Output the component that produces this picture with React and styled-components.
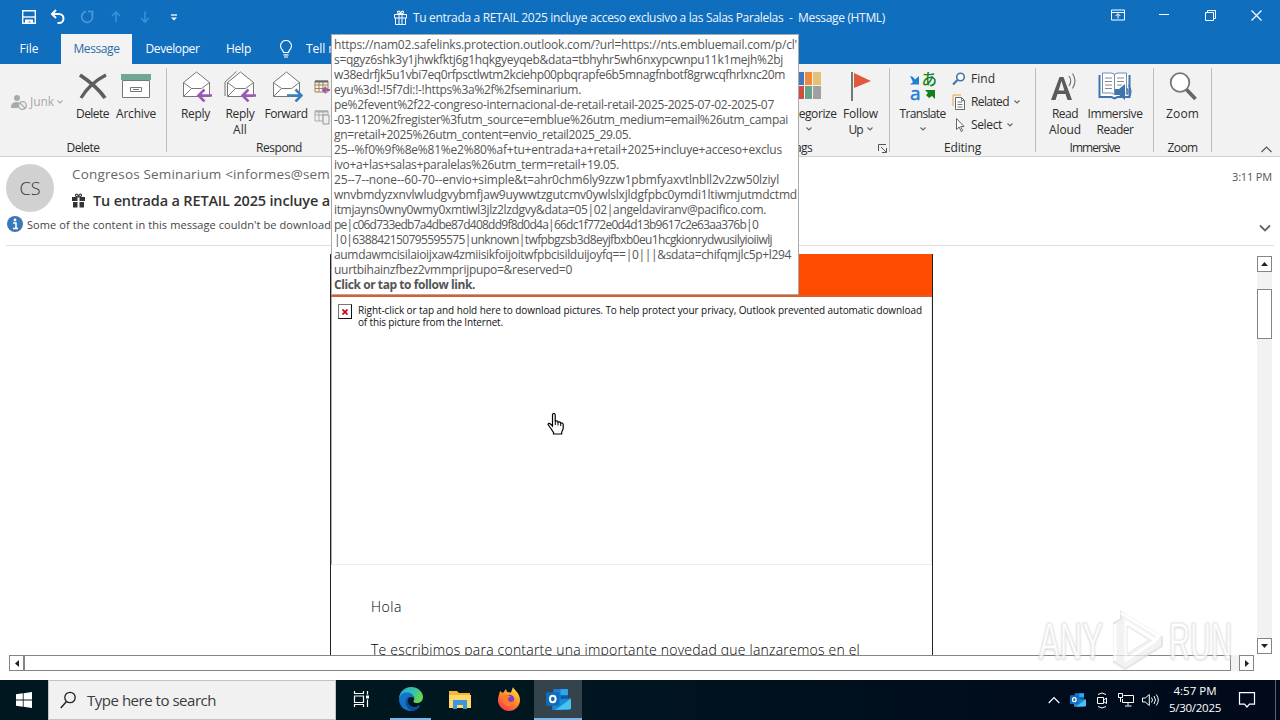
import React, { useLayoutEffect, useRef, useState } from 'react';
import styled, { createGlobalStyle } from 'styled-components';

const Global = createGlobalStyle`
  * { box-sizing: border-box; }
  body { margin: 0; background: #fff; overflow: hidden; }
  body, div, span { font-family: "Open Sans", "Noto Sans", sans-serif; }
  svg { display: block; flex: none; }
`;

const Run = styled.span`
  display: inline-block;
  white-space: pre;
  flex: none;
  font-size: ${p => p.$size || 12}px;
  font-weight: ${p => p.$weight || 400};
  color: ${p => p.$color || 'inherit'};
`;

/* A single line of text whose tracking is adjusted to fill a known width. */
function Text({ w, size, weight, color, children }) {
  const ref = useRef(null);
  const [tracking, setTracking] = useState(0);
  useLayoutEffect(() => {
    const el = ref.current;
    el.style.letterSpacing = '0px';
    const natural = el.getBoundingClientRect().width;
    setTracking((w - natural) / Math.max(1, children.length));
    el.style.letterSpacing = '';
  }, [w, children]);
  return (
    <Run ref={ref} $size={size} $weight={weight} $color={color} style={{ letterSpacing: tracking }}>
      {children}
    </Run>
  );
}

const Screen = styled.div`
  position: relative;
  display: flex;
  flex-direction: column;
  width: 1280px;
  height: 720px;
  overflow: hidden;
  background: #fff;
`;

/* ---------- Title bar ---------- */
const TitleBar = styled.div`
  display: flex;
  align-items: center;
  height: 34px;
  flex: none;
  background: #106ebe;
  color: #eef6fd;
`;
const QuickAccess = styled.div`
  display: flex;
  align-items: center;
  width: 394px;
  padding-left: 21px;
  gap: 13px;
`;
const Caption = styled.div`
  display: flex;
  align-items: center;
  gap: 6px;
  flex: 1;
`;
const WindowButtons = styled.div`
  display: flex;
  width: 185px;
  height: 30px;
  align-self: flex-start;
`;
const WindowButton = styled.div`
  display: flex;
  align-items: center;
  justify-content: center;
  width: 46px;
`;

/* ---------- Tabs ---------- */
const Tabs = styled.div`
  display: flex;
  height: 30px;
  flex: none;
  background: #106ebe;
  color: #fff;
`;
const Tab = styled.div`
  display: flex;
  align-items: center;
  justify-content: center;
  gap: 13px;
  width: ${p => p.$w}px;
  margin-left: ${p => p.$gap || 0}px;
  padding-bottom: 1px;
  background: ${p => (p.$active ? '#f3f3f3' : 'transparent')};
  color: ${p => (p.$active ? '#2b6cab' : '#fff')};
`;

/* ---------- Ribbon ---------- */
const Ribbon = styled.div`
  display: flex;
  height: 93px;
  flex: none;
  background: #f2f2f2;
  border-bottom: 1px solid #cfcfcf;
  color: #2d2d2d;
`;
const Group = styled.div`
  display: flex;
  flex-direction: column;
  width: ${p => p.$w}px;
  flex: none;
`;
const GroupBody = styled.div`
  display: flex;
  height: 76px;
  padding: ${p => p.$pad || '0'};
  justify-content: ${p => p.$justify || 'flex-start'};
`;
const GroupLabel = styled.div`
  display: flex;
  justify-content: center;
  align-items: center;
  height: 15px;
`;
const Launcher = styled.div`
  position: absolute;
  left: 878px;
  top: 144px;
`;
const Separator = styled.div`
  width: 1px;
  height: 84px;
  margin-top: 4px;
  background: #bdbdbd;
  flex: none;
`;
const BigButton = styled.div`
  display: flex;
  flex-direction: column;
  align-items: center;
  width: ${p => p.$w}px;
  flex: none;
`;
const IconBox = styled.div`
  display: flex;
  align-items: center;
  justify-content: center;
  height: 41px;
  padding-top: 3px;
`;
const ButtonLine = styled.div`
  display: flex;
  align-items: center;
  justify-content: center;
  gap: 4px;
  height: 16px;
`;
const SmallButtons = styled.div`
  display: flex;
  flex-direction: column;
  padding: ${p => p.$pad || '0'};
  gap: ${p => p.$gap || 0}px;
`;
const SmallButton = styled.div`
  display: flex;
  align-items: center;
  height: 23px;
  gap: ${p => p.$gap || 5}px;
  color: ${p => (p.$disabled ? '#a9a9a9' : 'inherit')};
`;
const Collapse = styled.div`
  display: flex;
  align-items: flex-end;
  justify-content: flex-end;
  flex: 1;
  padding: 0 8px 3px 0;
`;

/* ---------- Message header ---------- */
const Header = styled.div`
  display: flex;
  flex-direction: column;
  height: 89px;
  flex: none;
  margin: 0 6px;
  border-bottom: 1px solid #dedde2;
`;
const HeaderTop = styled.div`
  display: flex;
  height: 58px;
`;
const Avatar = styled.div`
  display: flex;
  align-items: center;
  justify-content: center;
  width: 48px;
  height: 48px;
  margin-top: 7px;
  border-radius: 50%;
  background: #d1d1d1;
`;
const HeaderLines = styled.div`
  display: flex;
  flex-direction: column;
  flex: 1;
  padding: 4px 0 0 18px;
`;
const HeaderLine = styled.div`
  display: flex;
  align-items: center;
  gap: 8px;
  height: 26px;
`;
const Received = styled.div`
  padding-top: 8px;
  margin-right: 2px;
  line-height: 20px;
`;
const InfoRow = styled.div`
  display: flex;
  align-items: center;
  gap: 4px;
  height: 18px;
  padding-left: 1px;
`;
const Expand = styled.div`
  margin: 8px 3px 0 auto;
`;

/* ---------- Reading area ---------- */
const Reading = styled.div`
  display: flex;
  flex: none;
  height: 410px;
  padding: 8px 0 1px;
`;
const Mail = styled.div`
  display: flex;
  flex-direction: column;
  width: 603px;
  margin-left: 330px;
  overflow: hidden;
  border-left: 1px solid #222;
  border-right: 1px solid #222;
`;
const Banner = styled.div`
  height: 43px;
  flex: none;
  background: #ff4b00;
  border-bottom: 2px solid #e35c26;
`;
const Blocked = styled.div`
  display: flex;
  gap: 6px;
  height: 268px;
  flex: none;
  padding: 7px 0 0 6px;
  border: 1px solid #ececec;
  border-top: 0;
  border-left-color: #aaa;
`;
const BrokenImage = styled.div`
  display: flex;
  align-items: center;
  justify-content: center;
  width: 14px;
  height: 15px;
  border: 1px solid #777;
  border-right-color: #111;
  border-bottom-color: #111;
`;
const BlockedText = styled.div`
  display: flex;
  flex-direction: column;
  align-items: flex-start;
  line-height: 12px;
`;
const Paragraph = styled.div`
  padding-left: 40px;
  margin-top: ${p => p.$top}px;
  height: 20px;
  line-height: 20px;
  flex: none;
`;
const VScroll = styled.div`
  display: flex;
  flex-direction: column;
  width: 15px;
  height: 398px;
  margin: 2px 8px 0 auto;
  background: #f2f2f2;
`;
const HScroll = styled.div`
  display: flex;
  height: 16px;
  width: 1245px;
  flex: none;
  margin: -1px 0 9px 9px;
  background: #f2f2f2;
`;
const ScrollButton = styled.div`
  display: flex;
  align-items: center;
  justify-content: center;
  width: 15px;
  height: 16px;
  flex: none;
  background: #fff;
  border: 1px solid #858585;
`;
const VThumb = styled.div`
  height: 50px;
  margin: 17px 0 auto;
  background: #fff;
  border: 1px solid #858585;
`;
const HThumb = styled.div`
  width: 1207px;
  margin-right: auto;
  background: #fff;
  border: 1px solid #858585;
`;

/* ---------- Overlays ---------- */
const LinkTip = styled.div`
  position: absolute;
  left: 331px;
  top: 34px;
  width: 468px;
  height: 261px;
  padding: 2px 0 0 2px;
  background: #fff;
  border: 1px solid #aaa;
  color: #555;
  overflow: hidden;
`;
const TipLine = styled.div`
  height: 15px;
  line-height: 15px;
  display: flex;
`;
const Pointer = styled.div`
  position: absolute;
  left: 547px;
  top: 413px;
`;
const Watermark = styled.div`
  position: absolute;
  left: 1039px;
  top: 608px;
  display: flex;
  align-items: center;
  gap: 6px;
  height: 66px;
  width: 194px;
  opacity: 0.75;
`;
const MarkWord = styled.div`
  width: 64px;
  height: 66px;
  flex: none;
  line-height: 66px;
  font-family: "Liberation Sans", sans-serif !important;
  font-size: 52px;
  white-space: nowrap;
  transform: scaleX(${p => p.$squeeze});
  transform-origin: left center;
  color: #fff;
  -webkit-text-stroke: 1px #e2e2e2;
  text-shadow: 0 0 3px #ccc, 0 1px 3px #ccc;
`;

/* ---------- Task bar ---------- */
const TaskBar = styled.div`
  display: flex;
  height: 40px;
  flex: none;
  background: linear-gradient(90deg, #001720 0%, #001720 40%, #000c1c 80%, #000a1b 100%);
  color: #fff;
`;
const Start = styled.div`
  display: flex;
  align-items: center;
  justify-content: center;
  width: 48px;
`;
const Search = styled.div`
  display: flex;
  align-items: center;
  gap: 11px;
  width: 288px;
  padding-left: 11px;
  background: #f1f1f1;
  border: 1px solid #c4c4c4;
`;
const TaskItem = styled.div`
  display: flex;
  align-items: center;
  justify-content: center;
  background: ${p => (p.$active ? '#35444c' : 'transparent')};
  border-bottom: 2px solid ${p => (p.$running ? '#76b9ed' : 'transparent')};
  margin: 0 ${p => (p.$inset ? 4 : 0)}px;
  width: ${p => p.$w || 49}px;
`;
const Tray = styled.div`
  display: flex;
  align-items: center;
  margin-left: auto;
  gap: 8px;
`;
const Clock = styled.div`
  display: flex;
  flex-direction: column;
  align-items: center;
  width: 56px;
  padding-bottom: 2px;
  line-height: 17px;
`;
const ShowDesktop = styled.div`
  width: 5px;
  height: 40px;
  margin-left: 4px;
  border-left: 1px solid #5a6470;
`;

/* ---------- Drawings ---------- */
const Svg = ({ w, h, vb, children, ...rest }) => (
  <svg width={w} height={h} viewBox={vb || `0 0 ${w} ${h}`} fill="none" {...rest}>{children}</svg>
);
const Caret = ({ c = '#666' }) => (
  <Svg w={6} h={4}><path d="M.5.5 3 3 5.500.5" stroke={c} strokeWidth="1.1" /></Svg>
);
const Gift = ({ c, solid }) => (
  <Svg w={13} h={15}>
    {solid ? (
      <path d="M0 4h5.500v4H0zM7.500 4H13v4H7.500zM1 9h4.500v5.500H1zM7.500 9H12v5.500H7.500z" fill={c} />
    ) : (
      <path d="M.5 4.500h12v3.500H.5zM1.500 8v6.500h10V8M5 4.500v10M8 4.500v10" stroke={c} />
    )}
    <path d="M6.500 4C5 4 3 3.500 3.500 2S6 .8 6.500 4C7 .8 9 .5 9.500 2S8 4 6.500 4" stroke={c} strokeWidth="1.1" />
  </Svg>
);
const Envelope = ({ arrow, double, right }) => (
  <Svg w={34} h={32}>
    {double && <path d="M2 26V12L13.500 1.500" stroke="#777" />}
    <path d="M4.500 12.500 17.500 2l13 10.500v14h-26z" fill="#fff" stroke="#777" />
    <path d="M4.500 12.500l8 6h10l8-6M12.500 18.500l-8 8" stroke="#777" />
    {right ? (
      <path d="M18 25.500h14M26.500 19.500l6 6-6 6" stroke={arrow} strokeWidth="2.600" />
    ) : (
      <path d="M33 25.500H20M25.500 19.500l-6 6 6 6" stroke={arrow} strokeWidth="2.600" />
    )}
  </Svg>
);
const OutlookIcon = ({ s }) => (
  <Svg w={s} h={s} vb="0 0 24 24">
    <path d="M7 2h14v12H7z" fill="#1781d8" /><path d="M14 2h7v6h-7z" fill="#2fa7ec" /><path d="M14 8h7v6h-7z" fill="#0c59a4" />
    <path d="M6 12l18-1v9a2 2 0 0 1-2 2H6z" fill="#1a8ad8" /><path d="M24 11v10L9 22z" fill="#4bc1f0" />
    <rect y="5" width="13" height="13" rx="1" fill="#0f6cbd" />
    <ellipse cx="6.500" cy="11.500" rx="2.700" ry="3.100" stroke="#fff" strokeWidth="1.900" />
  </Svg>
);

const TIP = [
  ["https://nam02.safelinks.protection.outlook.com/?url=https://nts.embluemail.com/p/cl'", 463],
  ['s=qgyz6shk3y1jhwkfktj6g1hqkgyeyqeb&data=tbhyhr5wh6nxypcwnpu11k1mejh%2bj', 449],
  ['w38edrfjk5u1vbi7eq0rfpsctlwtm2kciehp00pbqrapfe6b5mnagfnbotf8grwcqfhrlxnc20m', 451],
  ['eyu%3d!-!5f7di:!-!https%3a%2f%2fseminarium.', 247],
  ['pe%2fevent%2f22-congreso-internacional-de-retail-retail-2025-2025-07-02-2025-07', 440],
  ['-03-1120%2fregister%3futm_source=emblue%26utm_medium=email%26utm_campai', 454],
  ['gn=retail+2025%26utm_content=envio_retail2025_29.05.', 297],
  ['25--%f0%9f%8e%81%e2%80%af+tu+entrada+a+retail+2025+incluye+acceso+exclus', 448],
  ['ivo+a+las+salas+paralelas%26utm_term=retail+19.05.', 285],
  ['25--7--none--60-70--envio+simple&t=ahr0chm6ly9zzw1pbmfyaxvtlnbll2v2zw50lziyl', 445],
  ['wnvbmdyzxnvlwludgvybmfjaw9uywwtzgutcmv0ywlslxjldgfpbc0ymdi1ltiwmjutmdctmd', 463],
  ['itmjayns0wny0wmy0xmtiwl3jlz2lzdgvy&data=05|02|angeldaviranv@pacifico.com.', 432],
  ['pe|c06d733edb7a4dbe87d408dd9f8d0d4a|66dc1f772e0d4d13b9617c2e63aa376b|0', 424],
  ['|0|638842150795595575|unknown|twfpbgzsb3d8eyjfbxb0eu1hcgkionrydwusilyioiiwlj', 438],
  ['aumdawmcisilaioijxaw4zmiisikfoijoitwfpbcisilduijoyfq==|0|||&sdata=chifqmjlc5p+l294', 457],
  ['uurtbihainzfbez2vmmprijpupo=&reserved=0', 238],
];

export default function App() {
  return (
    <Screen>
      <Global />
      <TitleBar>
        <QuickAccess>
          <Svg w={16} h={16}><path d="M1.700 1.700h12.600v12.600H1.700z" stroke="#fff" strokeWidth="1.400" /><path d="M2 8h12" stroke="#fff" strokeWidth="1.400" /><path d="M4 10.500h8V15H9.500v-2.500h-2V15H4z" fill="#fff" /></Svg>
          <Svg w={16} h={16}><path d="M2 5h7a4.500 4.500 0 0 1 0 9H7.500M6 1 2 5l4 4" stroke="#fff" strokeWidth="2" /></Svg>
          <Svg w={16} h={16}><path d="M12.500 4.500A5.500 5.500 0 1 1 7 2.500M9 2.500h4.500V7" stroke="#4d9ade" strokeWidth="1.600" /></Svg>
          <Svg w={16} h={16}><path d="M8 13V3M4 7l4-4 4 4" stroke="#3c8fd8" strokeWidth="1.600" /></Svg>
          <Svg w={16} h={16}><path d="M8 2.500v10.500M4 9l4 4 4-4" stroke="#3c8fd8" strokeWidth="1.600" /></Svg>
          <Svg w={16} h={16}><path d="M5 6h6" stroke="#fff" strokeWidth="1.300" /><path d="M5 8.500h6l-3 3z" fill="#fff" /></Svg>
        </QuickAccess>
        <Caption>
          <Gift c="#fff" />
          <Text w={472} size={12}>{'Tu entrada a RETAIL 2025 incluye acceso exclusivo a las Salas Paralelas  -  Message (HTML)'}</Text>
        </Caption>
        <WindowButtons>
          <WindowButton><Svg w={14} h={12}><path d="M.5 1h13v10H.5zM.5 3.500h13M7 9.500V5M4.700 7 7 4.700 9.300 7" stroke="#fff" /></Svg></WindowButton>
          <WindowButton><Svg w={10} h={10}><path d="M0 4.500h10" stroke="#fff" /></Svg></WindowButton>
          <WindowButton><Svg w={11} h={11}><path d="M.5 2.500h8v8h-8zM2.500 2.500v-2h8v8h-2" stroke="#fff" /></Svg></WindowButton>
          <WindowButton><Svg w={11} h={11}><path d="M.5.5l10 10M10.500.5l-10 10" stroke="#fff" strokeWidth="1.200" /></Svg></WindowButton>
        </WindowButtons>
      </TitleBar>
      <Tabs>
        <Tab $w={58}><Text w={19}>File</Text></Tab>
        <Tab $w={71} $gap={3} $active><Text w={46}>Message</Text></Tab>
        <Tab $w={81}><Text w={54}>Developer</Text></Tab>
        <Tab $w={51}><Text w={25}>Help</Text></Tab>
        <Tab $w={67} $gap={15}>
          <Svg w={14} h={18}><path d="M4.500 12.500C4.500 10 1.500 9.500 1.500 6a5.500 5.500 0 0 1 11 0c0 3.500-3 4-3 6.500zM4.500 14.800h5M5 17h4" stroke="#fff" strokeWidth="1.200" /></Svg>
          <Text w={40}>Tell me</Text>
        </Tab>
      </Tabs>
      <Ribbon>
        <Group $w={166}>
          <GroupBody>
            <GroupBody $pad="26px 0 0 11px">
              <SmallButton $disabled $gap={3}>
                <Svg w={16} h={16}><circle cx="6" cy="4" r="3" fill="#aaa" /><path d="M0 14c0-4 1.500-6 6-6l3 1-2 5z" fill="#aaa" /><circle cx="11.500" cy="11.500" r="3.800" fill="#f2f2f2" stroke="#aaa" strokeWidth="1.300" /><path d="M9 9l5 5" stroke="#aaa" strokeWidth="1.300" /></Svg>
                <Text w={24}>Junk</Text>
                <Caret c="#aaa" />
              </SmallButton>
            </GroupBody>
            <BigButton $w={59}>
              <IconBox><Svg w={30} h={28}><path d="M2 3c9 6 18 13 25 23" stroke="#5d5d5d" strokeWidth="3.800" /><path d="M28 3C18 8 9 16 3 26" stroke="#5d5d5d" strokeWidth="3.200" /></Svg></IconBox>
              <ButtonLine><Text w={33}>Delete</Text></ButtonLine>
            </BigButton>
            <BigButton $w={28}>
              <IconBox><Svg w={30} h={26}><path d="M1.500 7.500h27v17h-27z" fill="#fff" stroke="#777" /><path d="M0 1h30v6H0z" fill="#6fa795" /><path d="M9.500 14.500h11v4h-11zM12 16.500h6" stroke="#777" /></Svg></IconBox>
              <ButtonLine><Text w={40}>Archive</Text></ButtonLine>
            </BigButton>
          </GroupBody>
          <GroupLabel><Text w={33}>Delete</Text></GroupLabel>
        </Group>
        <Separator />
        <Group $w={224}>
          <GroupBody $pad="0 0 0 6px">
            <BigButton $w={45}>
              <IconBox><Envelope arrow="#9b59b6" /></IconBox>
              <ButtonLine><Text w={29}>Reply</Text></ButtonLine>
            </BigButton>
            <BigButton $w={44}>
              <IconBox><Envelope arrow="#9b59b6" double /></IconBox>
              <ButtonLine><Text w={29}>Reply</Text></ButtonLine>
              <ButtonLine><Text w={14}>All</Text></ButtonLine>
            </BigButton>
            <BigButton $w={48}>
              <IconBox><Envelope arrow="#3d7ebf" right /></IconBox>
              <ButtonLine><Text w={43}>Forward</Text></ButtonLine>
            </BigButton>
            <SmallButtons $pad="11px 0 0 4px" $gap={7}>
              <SmallButton><Svg w={16} h={16}><path d="M1 2h13v11H1zM1 6h13M5 3v10M9 3v10M1 9.500h13" stroke="#a88350" /><path d="M1 2.500h13" stroke="#666" strokeWidth="2" /><path d="M16 11H9M12 8l-3 3 3 3" stroke="#9b59b6" strokeWidth="1.800" /></Svg></SmallButton>
              <SmallButton><Svg w={16} h={16}><path d="M1 2h13v10H1zM1 6h13M5 3v9M9 3v9" stroke="#aaa" /><path d="M1 2.500h13" stroke="#aaa" strokeWidth="2" /><path d="M9 6h6v9H9z" fill="#eee" stroke="#999" /></Svg></SmallButton>
            </SmallButtons>
          </GroupBody>
          <GroupLabel><Text w={46}>Respond</Text></GroupLabel>
        </Group>
        <Group $w={321} />
        <Group $w={177}>
          <GroupBody $justify="flex-end" $pad="0 6px 0 0">
            <BigButton $w={58}>
              <IconBox><Svg w={24} h={28}>
                <path d="M0 0h7v13H0z" fill="#4677be" /><path d="M8 0h7v13H8z" fill="#ef8a3a" /><path d="M16 0h8v13h-8z" fill="#e3c179" />
                <path d="M0 14h7v13H0z" fill="#cf4e3c" /><path d="M8 14h7v13H8z" fill="#67a28a" /><path d="M16 14h8v13h-8z" fill="#a0a0a0" />
              </Svg></IconBox>
              <ButtonLine><Text w={55}>Categorize</Text></ButtonLine>
              <ButtonLine><Caret /></ButtonLine>
            </BigButton>
            <BigButton $w={45}>
              <IconBox><Svg w={20} h={29}><path d="M1 0v29" stroke="#777" strokeWidth="2" /><path d="M3 1l17 8L3 16z" fill="#e2583e" /></Svg></IconBox>
              <ButtonLine><Text w={35}>Follow</Text></ButtonLine>
              <ButtonLine><Text w={14}>Up</Text><Caret /></ButtonLine>
            </BigButton>
          </GroupBody>
          <GroupLabel><Text w={23}>Tags</Text></GroupLabel>
        </Group>
        <Separator />
        <Group $w={145}>
          <GroupBody $pad="0 0 0 7px">
            <BigButton $w={51}>
              <IconBox><Svg w={28} h={30}>
                <path d="M1 5l3 1 2 2.500L10 5v8.500H1L4 11z" fill="#1d7fd6" />
                <path d="M16 19h10v9l-3-3-3 2-3-3 2-2z" fill="#128020" />
                <text x="12.500" y="14" fontSize="15.500" fontWeight="500" fontFamily='"Noto Sans CJK JP", sans-serif' fill="#128020">あ</text>
                <text x="1" y="28.500" fontSize="19" fontFamily='"Open Sans", sans-serif' stroke="#1d7fd6" strokeWidth=".5" fill="#1d7fd6">a</text>
              </Svg></IconBox>
              <ButtonLine><Text w={46}>Translate</Text></ButtonLine>
              <ButtonLine><Caret /></ButtonLine>
            </BigButton>
            <SmallButtons $pad="3px 0 0 4px">
              <SmallButton><Svg w={14} h={14}><circle cx="8.500" cy="5" r="3.800" fill="#fff" stroke="#3f74ae" strokeWidth="1.600" /><path d="M5.500 8 1 12.500" stroke="#3f74ae" strokeWidth="2.200" /></Svg><Text w={24}>Find</Text></SmallButton>
              <SmallButton><Svg w={14} h={16}><path d="M1 12V1h8" stroke="#e3a24c" /><path d="M3.500 3.500h6l3 3v9h-9z" fill="#fff" stroke="#666" /><path d="M5.500 8h5M5.500 10.500h5M5.500 13h5M9.500 3.500v3h3" stroke="#777" /></Svg><Text w={38}>Related</Text><Caret /></SmallButton>
              <SmallButton><Svg w={14} h={16}><path d="M4.500 1.500v11l2.700-2.500 2 4.500 1.500-.7-2-4.300h3.300z" fill="#fff" stroke="#666" /></Svg><Text w={31}>Select</Text><Caret /></SmallButton>
            </SmallButtons>
          </GroupBody>
          <GroupLabel><Text w={37}>Editing</Text></GroupLabel>
        </Group>
        <Separator />
        <Group $w={117}>
          <GroupBody $pad="0 0 0 7px">
            <BigButton $w={44}>
              <IconBox><Svg w={30} h={30}><path d="M1 29 9.500 6h4L22 29h-4.500l-2-6h-8l-2 6zM8.600 19.500h5.800L11.500 10z" fill="#5b5b5b" fillRule="evenodd" /><path d="M19 5q3.500 5 0 10M22.500 2.500q5 7.500 0 15" stroke="#777" strokeWidth="1.200" /></Svg></IconBox>
              <ButtonLine><Text w={26}>Read</Text></ButtonLine>
              <ButtonLine><Text w={32}>Aloud</Text></ButtonLine>
            </BigButton>
            <BigButton $w={56}>
              <IconBox><Svg w={34} h={30}><path d="M1.500 4v22h12l3 1.500 3-1.500h12V4" fill="#fff" stroke="#3f74ae" strokeWidth="2" /><path d="M4.500 2h8.500q3.500 0 3.500 2.500Q16.500 2 20 2h8.500v20H20q-3 0-3.500 2-.5-2-3.500-2H4.500zM16.500 4v20" fill="#fff" stroke="#6c8fb5" /><path d="M7 7h7M7 10.500h7M7 14h7M7 17.500h7M19 7h7M19 10.500h7M19 14h5" stroke="#888" /><path d="M17 18h4l6-5v16l-6-5h-4z" fill="#3f74ae" /><path d="M28.500 17q3 3.500 0 7M30.500 14q5 6.500 0 13" stroke="#3f74ae" strokeWidth="1.200" /></Svg></IconBox>
              <ButtonLine><Text w={55}>Immersive</Text></ButtonLine>
              <ButtonLine><Text w={37}>Reader</Text></ButtonLine>
            </BigButton>
          </GroupBody>
          <GroupLabel><Text w={50}>Immersive</Text></GroupLabel>
        </Group>
        <Separator />
        <Group $w={57}>
          <GroupBody $justify="center">
            <BigButton $w={50}>
              <IconBox><Svg w={28} h={29}><path d="M17 17l9.500 10" stroke="#666" strokeWidth="3.800" /><circle cx="11" cy="10.500" r="9.300" fill="#fff" stroke="#777" strokeWidth="1.800" /></Svg></IconBox>
              <ButtonLine><Text w={33}>Zoom</Text></ButtonLine>
            </BigButton>
          </GroupBody>
          <GroupLabel><Text w={30}>Zoom</Text></GroupLabel>
        </Group>
        <Separator />
        <Collapse><Svg w={11} h={7}><path d="M.5 6 5.500 1l5 5" stroke="#555" strokeWidth="1.200" /></Svg></Collapse>
      </Ribbon>

      <Header>
        <HeaderTop>
          <Avatar><Text w={21} size={18} weight={300} color="#333">CS</Text></Avatar>
          <HeaderLines>
            <HeaderLine><Text w={258} size={13.5} color="#666">{'Congresos Seminarium <informes@sem'}</Text></HeaderLine>
            <HeaderLine><Gift c="#333" solid /><Text w={237} size={14.5} weight={600} color="#333">Tu entrada a RETAIL 2025 incluye a</Text></HeaderLine>
          </HeaderLines>
          <Received><Text w={40} size={11} color="#555">3:11 PM</Text></Received>
        </HeaderTop>
        <InfoRow>
          <Svg w={16} h={16}><circle cx="8" cy="8" r="8" fill="#3b78b8" /><circle cx="8" cy="4" r="1.400" fill="#fff" /><path d="M6 7h3v5.500M6 12.500h5" stroke="#fff" strokeWidth="1.600" /></Svg>
          <Text w={304} size={11} color="#444">{"Some of the content in this message couldn't be download"}</Text>
          <Expand><Svg w={12} h={8}><path d="M1 1.500l5 5 5-5" stroke="#666" strokeWidth="1.800" /></Svg></Expand>
        </InfoRow>
      </Header>

      <Reading>
        <Mail>
          <Banner />
          <Blocked>
            <BrokenImage><Svg w={6} h={6}><path d="M.5.5l5 5M5.500.5l-5 5" stroke="#d0021b" strokeWidth="1.700" /></Svg></BrokenImage>
            <BlockedText>
              <Text w={564} size={10} color="#111">Right-click or tap and hold here to download pictures. To help protect your privacy, Outlook prevented automatic download</Text>
              <Text w={145} size={10} color="#111">of this picture from the Internet.</Text>
            </BlockedText>
          </Blocked>
          <Paragraph $top={31}><Text w={31} size={14} weight={300} color="#000">Hola</Text></Paragraph>
          <Paragraph $top={23}><Text w={489} size={14} weight={300} color="#000">Te escribimos para contarte una importante novedad que lanzaremos en el</Text></Paragraph>
        </Mail>
        <VScroll>
          <ScrollButton><Svg w={7} h={4}><path d="M0 4 3.500 0 7 4z" fill="#222" /></Svg></ScrollButton>
          <VThumb />
          <ScrollButton><Svg w={7} h={4}><path d="M0 0h7L3.500 4z" fill="#222" /></Svg></ScrollButton>
        </VScroll>
      </Reading>
      <HScroll>
        <ScrollButton><Svg w={4} h={7}><path d="M4 0v7L0 3.500z" fill="#222" /></Svg></ScrollButton>
        <HThumb />
        <ScrollButton><Svg w={4} h={7}><path d="M0 0v7l4-3.500z" fill="#222" /></Svg></ScrollButton>
      </HScroll>

      <TaskBar>
        <Start><Svg w={16} h={16}><path d="M0 2.300 6.800 1.300v6.300H0zM7.600 1.200 16 0v7.600H7.600zM0 8.400h6.800v6.300L0 13.700zM7.600 8.400H16V16l-8.400-1.200z" fill="#fff" /></Svg></Start>
        <Search>
          <Svg w={16} h={18}><circle cx="10" cy="6.500" r="5.200" stroke="#222" strokeWidth="1.300" /><path d="M6.500 10.500.8 17" stroke="#222" strokeWidth="1.400" /></Svg>
          <Text w={129} size={15} color="#3c3c3c">Type here to search</Text>
        </Search>
        <TaskItem $w={50}><Svg w={17} h={16}><path d="M1.500 0v2.500h9V0M1.500 16v-2.500h9V16M1.500 5h9v6.500h-9zM14.500 0v3.500M14.500 8.500V16" stroke="#fff" strokeWidth="1.200" /><path d="M13 4.500h3v3h-3z" fill="#fff" /></Svg></TaskItem>
        <TaskItem $w={41} $inset $running>
          <Svg w={24} h={24}>
            <defs><linearGradient id="eg" x1="0" x2="1" y2=".4"><stop stopColor="#27a3e2" /><stop offset=".6" stopColor="#35c1b1" /><stop offset="1" stopColor="#62d84f" /></linearGradient></defs>
            <path d="M0 11C1 4 6 0 12 0c7 0 12 5 12 10 0 4-3 6-6 6-4 0-4-2-3-3C17 8 9 5 4 8z" fill="url(#eg)" />
            <path d="M0 12C1 6 6 5 9 5.500c4 .5 6 3.500 6 6.500 0 0-.5-2-3-2-3 0-4 3-3 6 2 5 8 5 12 2-2 4-6 6-9 6C5 24 0 19 0 12z" fill="#1373c6" />
            <path d="M9 10c-5 5-1 12 4 14 4 0 7-3 8-5-6 3-11 1-12-4-.3-2 0-4 2-5z" fill="#0d4a94" />
          </Svg>
        </TaskItem>
        <TaskItem>
          <Svg w={22} h={19}><path d="M0 1h8l2 2h11v15H0z" fill="#f0b83b" /><path d="M0 5h22v13H0z" fill="#ffd868" /><path d="M4 10h14v9h-4v-4H8v4H4z" fill="#3a96dd" /></Svg>
        </TaskItem>
        <TaskItem $w={50}>
          <Svg w={24} h={24}>
            <defs><linearGradient id="fg" x1=".8" y1="0" x2=".2" y2="1"><stop stopColor="#ffe23d" /><stop offset=".5" stopColor="#ff8a22" /><stop offset="1" stopColor="#f4305c" /></linearGradient></defs>
            <path d="M3 4l3 2 3-4 1 3 4 .5L16 0c1 3 7 6 7 13 0 6-5 11-11 11S1 19 1 13c0-3 1-5 2-9z" fill="url(#fg)" />
            <circle cx="12.500" cy="12.500" r="4.800" fill="#7a3ed0" /><path d="M6 9c3-2 6-1 8 1-2 0-3 1-3 3 2 3 5 2 6 0 0 4-3 6-6 6-4-1-6-5-5-10z" fill="#ff7a2b" />
          </Svg>
        </TaskItem>
        <TaskItem $w={48} $active $running><OutlookIcon s={25} /></TaskItem>
        <Tray>
          <Svg w={16} h={8} vb="-2 0 16 8"><path d="M.7 7 6 1.500 11.300 7" stroke="#fff" strokeWidth="1.200" /></Svg>
          <OutlookIcon s={16} />
          <Svg w={16} h={17}><path d="M3.500 5.500h6v6h-6zM9.500 8l3-2v5.500l-3-2M4 2.500q4-3 8 0M4 14.500q4 3 8 0" stroke="#fff" /></Svg>
          <Svg w={16} h={14}><path d="M5.500 2.500h10v7h-11V6M10 9.500v3M7 13h6.500M.5.5h4v4h-4zM2.500 4.500V9" stroke="#fff" /></Svg>
          <Svg w={17} h={14}><path d="M.5 5h2.800l4-3.500v11L3.300 9H.5zM9.500 4.500q2 2.500 0 5M12 3q3 4 0 8M14.300 1.500q4 5.500 0 11" stroke="#fff" /></Svg>
          <Clock><Text w={43} size={11.5}>4:57 PM</Text><Text w={52} size={11.5}>5/30/2025</Text></Clock>
          <Svg w={32} h={16}><path d="M8.500.7h15v11.500h-5L16 15l-2.500-2.800h-5z" stroke="#fff" strokeWidth="1.200" /></Svg>
          <ShowDesktop />
        </Tray>
      </TaskBar>

      <Launcher><Svg w={9} h={9}><path d="M.5 7V.5H8M3 3l5 5M8.500 4v4.500H4" stroke="#555" /></Svg></Launcher>
      <LinkTip>
        {TIP.map(([line, width]) => (
          <TipLine key={line}><Text w={width}>{line}</Text></TipLine>
        ))}
        <TipLine><Text w={141} weight={700}>Click or tap to follow link.</Text></TipLine>
      </LinkTip>
      <Pointer>
        <Svg w={18} h={23}><path d="M5.500 13V2q0-1.500 1.300-1.500T8.200 2v6q2.500-.5 2.800 1 2-.5 2.700 1 2.300-.3 2.500 1.500v3.500q0 2-1.500 4V21H6.500v-1.500L3.500 15 1 11.500q.5-2 2.500-.5z" fill="#fff" stroke="#000" strokeWidth="1.200" /><path d="M8.300 8v4M11 9v3.500M13.700 10v3" stroke="#000" /></Svg>
      </Pointer>
      <Watermark>
        <MarkWord $squeeze={0.6}>ANY</MarkWord>
        <Svg w={54} h={64}>
          <path d="M12 10 5 14v39l11 7 37-23v-9L12 3z" fill="#eee" stroke="#ddd" strokeWidth="2" />
          <path d="M6 15v37M12 4l38 23-4 4-29-18v38l29-19" stroke="#fff" strokeWidth="3" />
          <path d="M18 17v28l22-14z" fill="#fff" stroke="#ddd" />
        </Svg>
        <MarkWord $squeeze={0.56}>RUN</MarkWord>
      </Watermark>
    </Screen>
  );
}
